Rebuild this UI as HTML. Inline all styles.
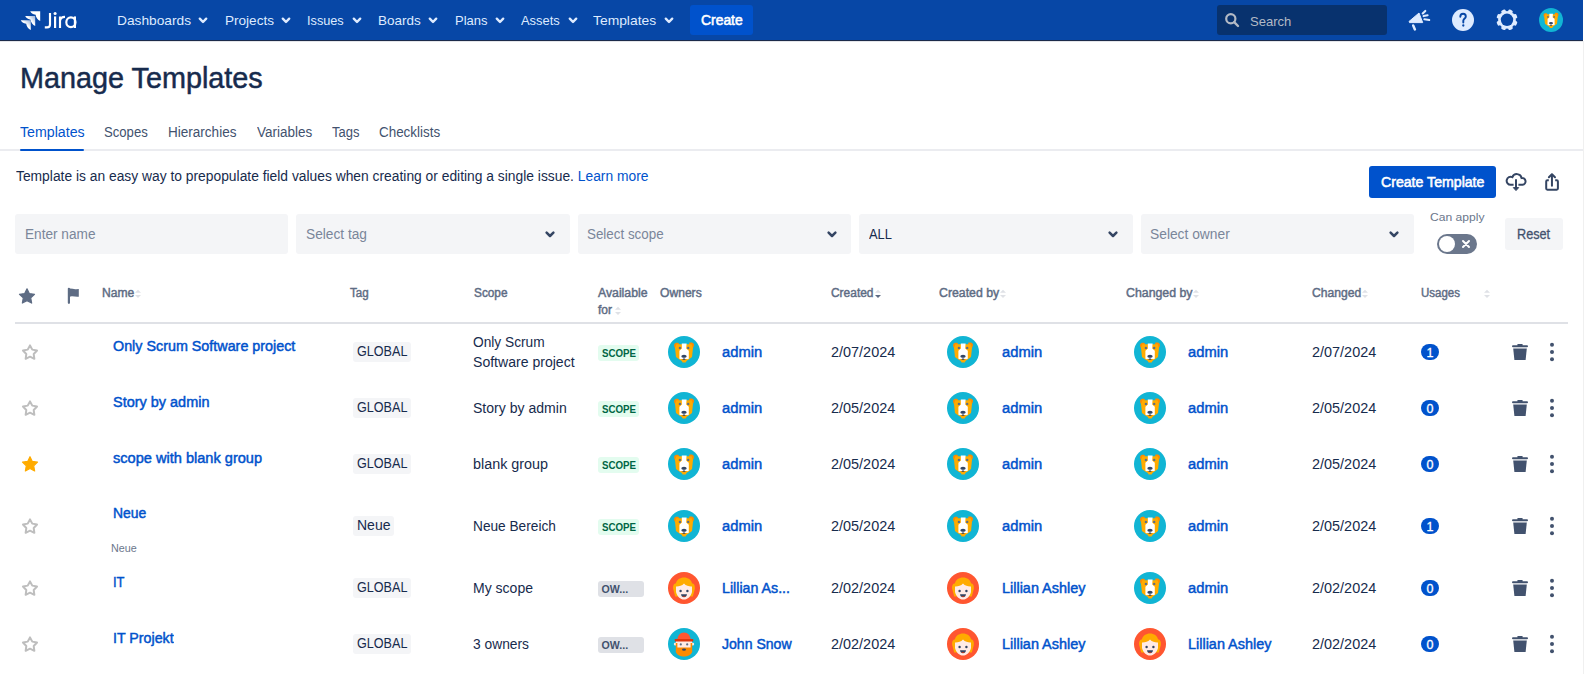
<!DOCTYPE html>
<html><head><meta charset="utf-8"><title>Manage Templates</title>
<style>
html,body{margin:0;padding:0;background:#fff;}
body{width:1584px;height:674px;overflow:hidden;position:relative;font-family:"Liberation Sans",sans-serif;}
.t{position:absolute;white-space:nowrap;}
svg{overflow:visible}
</style></head><body>
<div style="position:absolute;left:0px;top:0px;width:1583px;height:40px;background:#0747A6;border-radius:0px;"></div>
<div style="position:absolute;left:0px;top:40px;width:1583px;height:1px;background:#1c2b4a;border-radius:0px;"></div>
<div style="position:absolute;left:0px;top:41px;width:1583px;height:1px;background:#e4e6ea;border-radius:0px;"></div>
<div style="position:absolute;left:1583px;top:41px;width:1px;height:633px;background:#f0f0f0;border-radius:0px;"></div>
<svg style="position:absolute;left:0;top:0" width="100" height="40"><defs><linearGradient id="lg" x1="1" y1="0" x2="0" y2="1"><stop offset="0" stop-color="#fff" stop-opacity="0.55"/><stop offset="0.45" stop-color="#fff"/><stop offset="1" stop-color="#fff"/></linearGradient></defs><path d="M0,0 L-10,0 C-9.2,1.8 -7.6,3.2 -4.6,3.6 C-4.2,6.6 -2.6,8.6 0,9.8 Z" transform="translate(40.2,11.2)" fill="#fff"/><path d="M0,0 L-10,0 C-9.2,1.8 -7.6,3.2 -4.6,3.6 C-4.2,6.6 -2.6,8.6 0,9.8 Z" transform="translate(35.2,16.1)" fill="url(#lg)"/><path d="M0,0 L-10,0 C-9.2,1.8 -7.6,3.2 -4.6,3.6 C-4.2,6.6 -2.6,8.6 0,9.8 Z" transform="translate(30.8,20.2)" fill="url(#lg)"/></svg>
<svg style="position:absolute;left:0px;top:0px" width="90" height="40" viewBox="0 0 90 40"><g fill="none" stroke="#fff" stroke-width="2.15"><path d="M50,12.9 L50,24.4 C50,26.6 48.8,27.4 47,27.4 L44.8,27.4"/><path d="M55.1,16.4 L55.1,28"/><path d="M60,16.4 L60,28 M60,21 C60.3,18.2 62.2,16.9 65,16.9"/><ellipse cx="70.9" cy="22.2" rx="4.6" ry="4.9"/><path d="M74.9,16.4 L74.9,28"/></g><circle cx="55.1" cy="13.5" r="1.55" fill="#fff"/></svg>
<div id="t1" class="t nav" style="left:117.0px;top:11.62px;font-size:13.5px;line-height:17px;font-weight:400;color:#DEEBFF;transform:scaleX(1.0168);transform-origin:0 0;">Dashboards</div>
<svg style="position:absolute;left:198.2px;top:15px" width="10" height="10" viewBox="0 0 10 10"><path d="M1.8,3.7 L5,7 L8.2,3.7" fill="none" stroke="#DEEBFF" stroke-width="2.4" stroke-linecap="round" stroke-linejoin="round"/></svg>
<div id="t2" class="t nav" style="left:224.6px;top:11.62px;font-size:13.5px;line-height:17px;font-weight:400;color:#DEEBFF;transform:scaleX(1.0046);transform-origin:0 0;">Projects</div>
<svg style="position:absolute;left:281px;top:15px" width="10" height="10" viewBox="0 0 10 10"><path d="M1.8,3.7 L5,7 L8.2,3.7" fill="none" stroke="#DEEBFF" stroke-width="2.4" stroke-linecap="round" stroke-linejoin="round"/></svg>
<div id="t3" class="t nav" style="left:307.40000000000003px;top:11.62px;font-size:13.5px;line-height:17px;font-weight:400;color:#DEEBFF;transform:scaleX(0.9413);transform-origin:0 0;">Issues</div>
<svg style="position:absolute;left:351.8px;top:15px" width="10" height="10" viewBox="0 0 10 10"><path d="M1.8,3.7 L5,7 L8.2,3.7" fill="none" stroke="#DEEBFF" stroke-width="2.4" stroke-linecap="round" stroke-linejoin="round"/></svg>
<div id="t4" class="t nav" style="left:378.1px;top:11.62px;font-size:13.5px;line-height:17px;font-weight:400;color:#DEEBFF;transform:scaleX(0.9981);transform-origin:0 0;">Boards</div>
<svg style="position:absolute;left:428px;top:15px" width="10" height="10" viewBox="0 0 10 10"><path d="M1.8,3.7 L5,7 L8.2,3.7" fill="none" stroke="#DEEBFF" stroke-width="2.4" stroke-linecap="round" stroke-linejoin="round"/></svg>
<div id="t5" class="t nav" style="left:454.6px;top:11.62px;font-size:13.5px;line-height:17px;font-weight:400;color:#DEEBFF;transform:scaleX(0.9640);transform-origin:0 0;">Plans</div>
<svg style="position:absolute;left:494.5px;top:15px" width="10" height="10" viewBox="0 0 10 10"><path d="M1.8,3.7 L5,7 L8.2,3.7" fill="none" stroke="#DEEBFF" stroke-width="2.4" stroke-linecap="round" stroke-linejoin="round"/></svg>
<div id="t6" class="t nav" style="left:520.9px;top:11.62px;font-size:13.5px;line-height:17px;font-weight:400;color:#DEEBFF;transform:scaleX(0.9566);transform-origin:0 0;">Assets</div>
<svg style="position:absolute;left:567.5px;top:15px" width="10" height="10" viewBox="0 0 10 10"><path d="M1.8,3.7 L5,7 L8.2,3.7" fill="none" stroke="#DEEBFF" stroke-width="2.4" stroke-linecap="round" stroke-linejoin="round"/></svg>
<div id="t7" class="t nav" style="left:593.2px;top:11.62px;font-size:13.5px;line-height:17px;font-weight:400;color:#DEEBFF;transform:scaleX(1.0259);transform-origin:0 0;">Templates</div>
<svg style="position:absolute;left:663.7px;top:15px" width="10" height="10" viewBox="0 0 10 10"><path d="M1.8,3.7 L5,7 L8.2,3.7" fill="none" stroke="#DEEBFF" stroke-width="2.4" stroke-linecap="round" stroke-linejoin="round"/></svg>
<div style="position:absolute;left:690px;top:5px;width:63px;height:30px;background:#0052CC;border-radius:3px;"></div>
<div id="t8" class="t " style="left:700.8px;top:11.15px;font-size:14px;line-height:18px;font-weight:400;color:#fff;-webkit-text-stroke:0.55px #fff;transform:scaleX(0.9919);transform-origin:0 0;">Create</div>
<div style="position:absolute;left:1217px;top:5px;width:170px;height:30px;background:#08326E;border-radius:3px;"></div>
<svg style="position:absolute;left:1224px;top:12px" width="17" height="17" viewBox="0 0 17 17"><circle cx="6.8" cy="6.8" r="4.6" fill="none" stroke="#B3BAC5" stroke-width="2.2"/><path d="M10.2,10.2 L14,14" stroke="#B3BAC5" stroke-width="2.4" stroke-linecap="round"/></svg>
<div id="t9" class="t " style="left:1249.6px;top:12.62px;font-size:13.5px;line-height:17px;font-weight:400;color:#B3BAC5;transform:scaleX(0.9669);transform-origin:0 0;">Search</div>
<svg style="position:absolute;left:1404px;top:6px" width="30" height="28" viewBox="0 0 30 28"><path d="M5,15.5 L15,7 L18.7,16.6 L5.5,16.6 Z" fill="#DEEBFF" stroke="#DEEBFF" stroke-width="1" stroke-linejoin="round"/><path d="M9.2,19.5 L10.9,23.4" stroke="#DEEBFF" stroke-width="2.5" stroke-linecap="round"/><path d="M18.7,7.4 L21.3,4.9 M19.6,10.1 L23.6,9.2 M20.4,13.3 L25.2,14" stroke="#DEEBFF" stroke-width="2.1" stroke-linecap="round"/></svg>
<svg style="position:absolute;left:1451px;top:8px" width="24" height="24" viewBox="0 0 24 24"><circle cx="12" cy="12" r="11" fill="#DEEBFF"/><path d="M9.3,8.7 C9.3,6.8 10.6,5.8 12.1,5.8 C13.7,5.8 14.8,6.9 14.8,8.4 C14.8,10.3 12.5,10.7 12.3,12.7 L12.3,14.5" fill="none" stroke="#0747A6" stroke-width="1.9" stroke-linecap="round"/><circle cx="12.3" cy="17.5" r="1.15" fill="#0747A6"/></svg>
<svg style="position:absolute;left:1495px;top:8px" width="24" height="24" viewBox="0 0 24 24"><g transform="translate(12,11.8)"><rect x="-2.3" y="-10.6" width="4.6" height="5" rx="1.3" transform="rotate(22.5)" fill="#DEEBFF"/><rect x="-2.3" y="-10.6" width="4.6" height="5" rx="1.3" transform="rotate(67.5)" fill="#DEEBFF"/><rect x="-2.3" y="-10.6" width="4.6" height="5" rx="1.3" transform="rotate(112.5)" fill="#DEEBFF"/><rect x="-2.3" y="-10.6" width="4.6" height="5" rx="1.3" transform="rotate(157.5)" fill="#DEEBFF"/><rect x="-2.3" y="-10.6" width="4.6" height="5" rx="1.3" transform="rotate(202.5)" fill="#DEEBFF"/><rect x="-2.3" y="-10.6" width="4.6" height="5" rx="1.3" transform="rotate(247.5)" fill="#DEEBFF"/><rect x="-2.3" y="-10.6" width="4.6" height="5" rx="1.3" transform="rotate(292.5)" fill="#DEEBFF"/><rect x="-2.3" y="-10.6" width="4.6" height="5" rx="1.3" transform="rotate(337.5)" fill="#DEEBFF"/><circle r="8.9" fill="#DEEBFF"/><circle r="6.2" fill="#0747A6"/></g></svg>
<svg style="position:absolute;left:1539px;top:8px" width="24" height="24" viewBox="0 0 32 32"><circle cx="16" cy="16" r="16" fill="#11B5D4"/><path d="M6.2,8.6 C6.6,7 8.6,6.4 10.8,7.2 L10.8,12.4 L7.4,12.4 C6.2,11.4 5.9,10 6.2,8.6 Z" fill="#FF8B00"/><path d="M25.8,8.2 C25.4,6.6 23.4,6 21.2,6.8 L21.2,12 L24.6,12 C25.8,11 26.1,9.6 25.8,8.2 Z" fill="#FF8B00"/><path d="M8.4,8.2 L23.6,8.2 L25,12 L24,21 L20,24 L16,25.6 L12,24 L8,21 L7,12 Z" fill="#FFAB00"/><path d="M13.8,7.6 L18.6,7.6 L18.2,12.4 L20.8,14.8 L20.8,22.8 L16.2,24.4 L11.4,22.8 L11.4,14.8 L13.9,12.4 Z" fill="#fff"/><path d="M12.6,23 L19.8,23 L17.6,26.6 L14.6,26.6 Z" fill="#FFAB00"/><circle cx="11.9" cy="11.9" r="1.2" fill="#5E6C84"/><circle cx="20.2" cy="11.9" r="1.2" fill="#5E6C84"/><ellipse cx="16" cy="20.3" rx="2.7" ry="1.5" fill="#344563"/><path d="M16,21.5 L16,23.2 M14.6,23.4 L17.4,23.4" stroke="#344563" stroke-width="0.9"/></svg>
<div id="t10" class="t " style="left:19.8px;top:59.20px;font-size:30px;line-height:38px;font-weight:400;color:#172B4D;-webkit-text-stroke:0.5px #172B4D;transform:scaleX(0.9598);transform-origin:0 0;">Manage Templates</div>
<div id="t11" class="t " style="left:20.3px;top:123.15px;font-size:14px;line-height:18px;font-weight:400;color:#0052CC;transform:scaleX(1.0125);transform-origin:0 0;">Templates</div>
<div id="t12" class="t " style="left:104.2px;top:123.15px;font-size:14px;line-height:18px;font-weight:400;color:#42526E;transform:scaleX(0.9365);transform-origin:0 0;">Scopes</div>
<div id="t13" class="t " style="left:168.3px;top:123.15px;font-size:14px;line-height:18px;font-weight:400;color:#42526E;transform:scaleX(0.9669);transform-origin:0 0;">Hierarchies</div>
<div id="t14" class="t " style="left:256.7px;top:123.15px;font-size:14px;line-height:18px;font-weight:400;color:#42526E;transform:scaleX(0.9622);transform-origin:0 0;">Variables</div>
<div id="t15" class="t " style="left:331.7px;top:123.15px;font-size:14px;line-height:18px;font-weight:400;color:#42526E;transform:scaleX(0.9273);transform-origin:0 0;">Tags</div>
<div id="t16" class="t " style="left:378.6px;top:123.15px;font-size:14px;line-height:18px;font-weight:400;color:#42526E;transform:scaleX(0.9586);transform-origin:0 0;">Checklists</div>
<div style="position:absolute;left:0px;top:149px;width:1583px;height:2px;background:#EBECF0;border-radius:0px;"></div>
<div style="position:absolute;left:20px;top:149px;width:64px;height:2px;background:#0052CC;border-radius:1px;"></div>
<div id="t17" class="t " style="left:16.2px;top:167.35px;font-size:14px;line-height:18px;font-weight:400;color:#172B4D;transform:scaleX(0.9875);transform-origin:0 0;">Template is an easy way to prepopulate field values when creating or editing a single issue. <span style="color:#0052CC">Learn more</span></div>
<div style="position:absolute;left:1369px;top:166px;width:127px;height:32px;background:#0052CC;border-radius:3px;"></div>
<div id="t18" class="t " style="left:1381px;top:172.85px;font-size:14px;line-height:18px;font-weight:400;color:#fff;-webkit-text-stroke:0.55px #fff;transform:scaleX(1.0092);transform-origin:0 0;">Create Template</div>
<svg style="position:absolute;left:1502px;top:168px" width="30" height="28" viewBox="0 0 30 28"><path d="M11.6,16.8 H8.7 A4,4 0 1 1 10.4,9.2 A4.8,4.8 0 0 1 19.6,10 A3.4,3.4 0 0 1 20.6,16.8 H16.4" fill="none" stroke="#344563" stroke-width="2"/><path d="M14,11.2 L14,20" stroke="#344563" stroke-width="2"/><path d="M11.3,19.6 L16.7,19.6 L14,22.6 Z" fill="#344563" stroke="#344563" stroke-width="1" stroke-linejoin="round"/></svg>
<svg style="position:absolute;left:1540px;top:168px" width="24" height="28" viewBox="0 0 24 28"><path d="M8.8,12.2 L7.4,12.2 C6.6,12.2 6.2,12.6 6.2,13.4 L6.2,20.5 C6.2,21.3 6.6,21.65 7.4,21.65 L16.7,21.65 C17.5,21.65 17.9,21.3 17.9,20.5 L17.9,13.4 C17.9,12.6 17.5,12.2 16.7,12.2 L15.2,12.2" fill="none" stroke="#344563" stroke-width="2"/><path d="M11.95,6.8 L11.95,17.8" stroke="#344563" stroke-width="2" stroke-linecap="round"/><path d="M8.9,9.3 L11.95,6.2 L15,9.3" fill="none" stroke="#344563" stroke-width="2" stroke-linecap="round" stroke-linejoin="round"/></svg>
<div style="position:absolute;left:15px;top:214px;width:273.4px;height:40px;background:#F4F5F7;border-radius:3px;"></div>
<div id="t19" class="t " style="left:24.5px;top:225.15px;font-size:14px;line-height:18px;font-weight:400;color:#7A869A;transform:scaleX(0.9737);transform-origin:0 0;">Enter name</div>
<div style="position:absolute;left:296.4px;top:214px;width:273.4px;height:40px;background:#F4F5F7;border-radius:3px;"></div>
<div id="t20" class="t " style="left:305.9px;top:225.15px;font-size:14px;line-height:18px;font-weight:400;color:#7A869A;transform:scaleX(0.9793);transform-origin:0 0;">Select tag</div>
<svg style="position:absolute;left:544.0999999999999px;top:228px" width="12" height="12" viewBox="0 0 12 12"><path d="M2.6,4.6 L6,8 L9.4,4.6" fill="none" stroke="#344563" stroke-width="2.5" stroke-linecap="round" stroke-linejoin="round"/></svg>
<div style="position:absolute;left:577.8px;top:214px;width:273.4px;height:40px;background:#F4F5F7;border-radius:3px;"></div>
<div id="t21" class="t " style="left:587.3px;top:225.15px;font-size:14px;line-height:18px;font-weight:400;color:#7A869A;transform:scaleX(0.9561);transform-origin:0 0;">Select scope</div>
<svg style="position:absolute;left:825.4999999999999px;top:228px" width="12" height="12" viewBox="0 0 12 12"><path d="M2.6,4.6 L6,8 L9.4,4.6" fill="none" stroke="#344563" stroke-width="2.5" stroke-linecap="round" stroke-linejoin="round"/></svg>
<div style="position:absolute;left:859.2px;top:214px;width:273.4px;height:40px;background:#F4F5F7;border-radius:3px;"></div>
<div id="t22" class="t " style="left:868.7px;top:225.15px;font-size:14px;line-height:18px;font-weight:400;color:#172B4D;transform:scaleX(0.9197);transform-origin:0 0;">ALL</div>
<svg style="position:absolute;left:1106.8999999999999px;top:228px" width="12" height="12" viewBox="0 0 12 12"><path d="M2.6,4.6 L6,8 L9.4,4.6" fill="none" stroke="#344563" stroke-width="2.5" stroke-linecap="round" stroke-linejoin="round"/></svg>
<div style="position:absolute;left:1140.6px;top:214px;width:273.4px;height:40px;background:#F4F5F7;border-radius:3px;"></div>
<div id="t23" class="t " style="left:1150.1px;top:225.15px;font-size:14px;line-height:18px;font-weight:400;color:#7A869A;transform:scaleX(0.9858);transform-origin:0 0;">Select owner</div>
<svg style="position:absolute;left:1388.3px;top:228px" width="12" height="12" viewBox="0 0 12 12"><path d="M2.6,4.6 L6,8 L9.4,4.6" fill="none" stroke="#344563" stroke-width="2.5" stroke-linecap="round" stroke-linejoin="round"/></svg>
<div id="t24" class="t " style="left:1430.2px;top:210.02px;font-size:11.5px;line-height:14px;font-weight:400;color:#6B778C;transform:scaleX(1.0532);transform-origin:0 0;">Can apply</div>
<div style="position:absolute;left:1437px;top:234px;width:40px;height:20px;background:#6B778C;border-radius:10px;"></div>
<div style="position:absolute;left:1439px;top:236px;width:16px;height:16px;background:#fff;border-radius:8px;"></div>
<svg style="position:absolute;left:1460px;top:238px" width="12" height="12" viewBox="0 0 12 12"><path d="M3,3 L9,9 M9,3 L3,9" stroke="#fff" stroke-width="2" stroke-linecap="round"/></svg>
<div style="position:absolute;left:1505px;top:218px;width:58px;height:32px;background:#F4F5F7;border-radius:3px;"></div>
<div id="t25" class="t " style="left:1517.3px;top:224.65px;font-size:14px;line-height:18px;font-weight:400;color:#42526E;-webkit-text-stroke:0.3px #42526E;transform:scaleX(0.9051);transform-origin:0 0;">Reset</div>
<svg style="position:absolute;left:18px;top:287px" width="18" height="18" viewBox="0 0 18 18"><path d="M9.00,1.80 L11.29,6.54 L16.51,7.26 L12.71,10.91 L13.64,16.09 L9.00,13.60 L4.36,16.09 L5.29,10.91 L1.49,7.26 L6.71,6.54 Z" fill="#5E6C84" stroke="#5E6C84" stroke-width="1.2" stroke-linejoin="round"/></svg>
<svg style="position:absolute;left:66px;top:287px" width="16" height="18" viewBox="0 0 16 18"><path d="M2.9,1.8 L2.9,15.8" stroke="#5E6C84" stroke-width="2.2" stroke-linecap="round"/><path d="M2.4,1.8 C5,1 7.6,2.6 10.2,2.2 L12.8,1.9 L12.8,9.7 C10.2,10.3 7.6,9 5,9.4 L2.4,9.7 Z" fill="#5E6C84"/></svg>
<div id="t26" class="t " style="left:101.7px;top:286.34px;font-size:12px;line-height:15px;font-weight:400;color:#5E6C84;-webkit-text-stroke:0.45px currentColor;transform:scaleX(1.0092);transform-origin:0 0;">Name</div>
<svg style="position:absolute;left:133.8px;top:289px" width="8" height="10" viewBox="0 0 8 10"><path d="M1,3.8 L4,0.8 L7,3.8 Z" fill="#DFE1E6"/><path d="M1,5.9 L7,5.9 L4,8.9 Z" fill="#DFE1E6"/></svg>
<div id="t27" class="t " style="left:349.7px;top:286.34px;font-size:12px;line-height:15px;font-weight:400;color:#5E6C84;-webkit-text-stroke:0.45px currentColor;transform:scaleX(0.9641);transform-origin:0 0;">Tag</div>
<div id="t28" class="t " style="left:473.6px;top:286.34px;font-size:12px;line-height:15px;font-weight:400;color:#5E6C84;-webkit-text-stroke:0.45px currentColor;transform:scaleX(0.9839);transform-origin:0 0;">Scope</div>
<div id="t29" class="t " style="left:598px;top:286.34px;font-size:12px;line-height:15px;font-weight:400;color:#5E6C84;-webkit-text-stroke:0.45px currentColor;transform:scaleX(1.0214);transform-origin:0 0;">Available</div>
<div id="t30" class="t " style="left:660px;top:286.34px;font-size:12px;line-height:15px;font-weight:400;color:#5E6C84;-webkit-text-stroke:0.45px currentColor;transform:scaleX(1.0088);transform-origin:0 0;">Owners</div>
<div id="t31" class="t " style="left:830.5px;top:286.34px;font-size:12px;line-height:15px;font-weight:400;color:#5E6C84;-webkit-text-stroke:0.45px currentColor;transform:scaleX(0.9951);transform-origin:0 0;">Created</div>
<svg style="position:absolute;left:874px;top:289px" width="8" height="10" viewBox="0 0 8 10"><path d="M1,3.8 L4,0.8 L7,3.8 Z" fill="#DFE1E6"/><path d="M1,5.9 L7,5.9 L4,8.9 Z" fill="#5E6C84"/></svg>
<div id="t32" class="t " style="left:939.3px;top:286.34px;font-size:12px;line-height:15px;font-weight:400;color:#5E6C84;-webkit-text-stroke:0.45px currentColor;transform:scaleX(1.0242);transform-origin:0 0;">Created by</div>
<svg style="position:absolute;left:998.5px;top:289px" width="8" height="10" viewBox="0 0 8 10"><path d="M1,3.8 L4,0.8 L7,3.8 Z" fill="#DFE1E6"/><path d="M1,5.9 L7,5.9 L4,8.9 Z" fill="#DFE1E6"/></svg>
<div id="t33" class="t " style="left:1125.7px;top:286.34px;font-size:12px;line-height:15px;font-weight:400;color:#5E6C84;-webkit-text-stroke:0.45px currentColor;transform:scaleX(1.0280);transform-origin:0 0;">Changed by</div>
<svg style="position:absolute;left:1192px;top:289px" width="8" height="10" viewBox="0 0 8 10"><path d="M1,3.8 L4,0.8 L7,3.8 Z" fill="#DFE1E6"/><path d="M1,5.9 L7,5.9 L4,8.9 Z" fill="#DFE1E6"/></svg>
<div id="t34" class="t " style="left:1312px;top:286.34px;font-size:12px;line-height:15px;font-weight:400;color:#5E6C84;-webkit-text-stroke:0.45px currentColor;transform:scaleX(1.0101);transform-origin:0 0;">Changed</div>
<svg style="position:absolute;left:1361px;top:289px" width="8" height="10" viewBox="0 0 8 10"><path d="M1,3.8 L4,0.8 L7,3.8 Z" fill="#DFE1E6"/><path d="M1,5.9 L7,5.9 L4,8.9 Z" fill="#DFE1E6"/></svg>
<div id="t35" class="t " style="left:1421px;top:286.34px;font-size:12px;line-height:15px;font-weight:400;color:#5E6C84;-webkit-text-stroke:0.45px currentColor;transform:scaleX(0.9575);transform-origin:0 0;">Usages</div>
<svg style="position:absolute;left:1483px;top:289px" width="8" height="10" viewBox="0 0 8 10"><path d="M1,3.8 L4,0.8 L7,3.8 Z" fill="#DFE1E6"/><path d="M1,5.9 L7,5.9 L4,8.9 Z" fill="#DFE1E6"/></svg>
<div id="t36" class="t " style="left:598px;top:303.34px;font-size:12px;line-height:15px;font-weight:400;color:#5E6C84;-webkit-text-stroke:0.45px currentColor;">for</div>
<svg style="position:absolute;left:613.6px;top:306px" width="8" height="10" viewBox="0 0 8 10"><path d="M1,3.8 L4,0.8 L7,3.8 Z" fill="#DFE1E6"/><path d="M1,5.9 L7,5.9 L4,8.9 Z" fill="#DFE1E6"/></svg>
<div style="position:absolute;left:15px;top:322px;width:1553px;height:2px;background:#DFE1E6;border-radius:0px;"></div>
<svg style="position:absolute;left:21px;top:343px" width="18" height="18" viewBox="0 0 18 18"><path d="M9.00,2.40 L11.29,6.64 L16.04,7.51 L12.71,11.01 L13.35,15.79 L9.00,13.70 L4.65,15.79 L5.29,11.01 L1.96,7.51 L6.71,6.64 Z" fill="none" stroke="#BEBEBE" stroke-width="2" stroke-linejoin="round"/></svg>
<div id="t37" class="t " style="left:113.4px;top:336.95px;font-size:14px;line-height:18px;font-weight:400;color:#0052CC;-webkit-text-stroke:0.45px currentColor;transform:scaleX(1.0233);transform-origin:0 0;">Only Scrum Software project</div>
<div style="position:absolute;left:353px;top:342px;width:58px;height:20px;background:#F4F5F7;border-radius:3px;"></div>
<div id="t38" class="t " style="left:357.2px;top:341.85px;font-size:14px;line-height:18px;font-weight:400;color:#172B4D;transform:scaleX(0.8995);transform-origin:0 0;">GLOBAL</div>
<div id="t39" class="t " style="left:473.3px;top:332.95px;font-size:14px;line-height:18px;font-weight:400;color:#172B4D;transform:scaleX(0.9802);transform-origin:0 0;">Only Scrum</div>
<div id="t40" class="t " style="left:473.3px;top:352.55px;font-size:14px;line-height:18px;font-weight:400;color:#172B4D;transform:scaleX(1.0043);transform-origin:0 0;">Software project</div>
<div style="position:absolute;left:598px;top:345px;width:41px;height:16px;background:#E3FCEF;border-radius:3px;"></div>
<div id="t41" class="t " style="left:601.8px;top:346.19px;font-size:11px;line-height:14px;font-weight:700;color:#006644;transform:scaleX(0.8850);transform-origin:0 0;">SCOPE</div>
<svg style="position:absolute;left:668px;top:336px" width="32" height="32" viewBox="0 0 32 32"><circle cx="16" cy="16" r="16" fill="#11B5D4"/><path d="M6.2,8.6 C6.6,7 8.6,6.4 10.8,7.2 L10.8,12.4 L7.4,12.4 C6.2,11.4 5.9,10 6.2,8.6 Z" fill="#FF8B00"/><path d="M25.8,8.2 C25.4,6.6 23.4,6 21.2,6.8 L21.2,12 L24.6,12 C25.8,11 26.1,9.6 25.8,8.2 Z" fill="#FF8B00"/><path d="M8.4,8.2 L23.6,8.2 L25,12 L24,21 L20,24 L16,25.6 L12,24 L8,21 L7,12 Z" fill="#FFAB00"/><path d="M13.8,7.6 L18.6,7.6 L18.2,12.4 L20.8,14.8 L20.8,22.8 L16.2,24.4 L11.4,22.8 L11.4,14.8 L13.9,12.4 Z" fill="#fff"/><path d="M12.6,23 L19.8,23 L17.6,26.6 L14.6,26.6 Z" fill="#FFAB00"/><circle cx="11.9" cy="11.9" r="1.2" fill="#5E6C84"/><circle cx="20.2" cy="11.9" r="1.2" fill="#5E6C84"/><ellipse cx="16" cy="20.3" rx="2.7" ry="1.5" fill="#344563"/><path d="M16,21.5 L16,23.2 M14.6,23.4 L17.4,23.4" stroke="#344563" stroke-width="0.9"/></svg>
<div id="t42" class="t " style="left:722.1px;top:342.95px;font-size:14px;line-height:18px;font-weight:400;color:#0052CC;-webkit-text-stroke:0.45px currentColor;transform:scaleX(1.0528);transform-origin:0 0;">admin</div>
<div id="t43" class="t " style="left:830.9px;top:343.15px;font-size:14px;line-height:18px;font-weight:400;color:#172B4D;transform:scaleX(1.0310);transform-origin:0 0;">2/07/2024</div>
<svg style="position:absolute;left:947px;top:336px" width="32" height="32" viewBox="0 0 32 32"><circle cx="16" cy="16" r="16" fill="#11B5D4"/><path d="M6.2,8.6 C6.6,7 8.6,6.4 10.8,7.2 L10.8,12.4 L7.4,12.4 C6.2,11.4 5.9,10 6.2,8.6 Z" fill="#FF8B00"/><path d="M25.8,8.2 C25.4,6.6 23.4,6 21.2,6.8 L21.2,12 L24.6,12 C25.8,11 26.1,9.6 25.8,8.2 Z" fill="#FF8B00"/><path d="M8.4,8.2 L23.6,8.2 L25,12 L24,21 L20,24 L16,25.6 L12,24 L8,21 L7,12 Z" fill="#FFAB00"/><path d="M13.8,7.6 L18.6,7.6 L18.2,12.4 L20.8,14.8 L20.8,22.8 L16.2,24.4 L11.4,22.8 L11.4,14.8 L13.9,12.4 Z" fill="#fff"/><path d="M12.6,23 L19.8,23 L17.6,26.6 L14.6,26.6 Z" fill="#FFAB00"/><circle cx="11.9" cy="11.9" r="1.2" fill="#5E6C84"/><circle cx="20.2" cy="11.9" r="1.2" fill="#5E6C84"/><ellipse cx="16" cy="20.3" rx="2.7" ry="1.5" fill="#344563"/><path d="M16,21.5 L16,23.2 M14.6,23.4 L17.4,23.4" stroke="#344563" stroke-width="0.9"/></svg>
<div id="t44" class="t " style="left:1001.6px;top:342.95px;font-size:14px;line-height:18px;font-weight:400;color:#0052CC;-webkit-text-stroke:0.45px currentColor;transform:scaleX(1.0528);transform-origin:0 0;">admin</div>
<svg style="position:absolute;left:1134px;top:336px" width="32" height="32" viewBox="0 0 32 32"><circle cx="16" cy="16" r="16" fill="#11B5D4"/><path d="M6.2,8.6 C6.6,7 8.6,6.4 10.8,7.2 L10.8,12.4 L7.4,12.4 C6.2,11.4 5.9,10 6.2,8.6 Z" fill="#FF8B00"/><path d="M25.8,8.2 C25.4,6.6 23.4,6 21.2,6.8 L21.2,12 L24.6,12 C25.8,11 26.1,9.6 25.8,8.2 Z" fill="#FF8B00"/><path d="M8.4,8.2 L23.6,8.2 L25,12 L24,21 L20,24 L16,25.6 L12,24 L8,21 L7,12 Z" fill="#FFAB00"/><path d="M13.8,7.6 L18.6,7.6 L18.2,12.4 L20.8,14.8 L20.8,22.8 L16.2,24.4 L11.4,22.8 L11.4,14.8 L13.9,12.4 Z" fill="#fff"/><path d="M12.6,23 L19.8,23 L17.6,26.6 L14.6,26.6 Z" fill="#FFAB00"/><circle cx="11.9" cy="11.9" r="1.2" fill="#5E6C84"/><circle cx="20.2" cy="11.9" r="1.2" fill="#5E6C84"/><ellipse cx="16" cy="20.3" rx="2.7" ry="1.5" fill="#344563"/><path d="M16,21.5 L16,23.2 M14.6,23.4 L17.4,23.4" stroke="#344563" stroke-width="0.9"/></svg>
<div id="t45" class="t " style="left:1188px;top:342.95px;font-size:14px;line-height:18px;font-weight:400;color:#0052CC;-webkit-text-stroke:0.45px currentColor;transform:scaleX(1.0528);transform-origin:0 0;">admin</div>
<div id="t46" class="t " style="left:1312px;top:343.15px;font-size:14px;line-height:18px;font-weight:400;color:#172B4D;transform:scaleX(1.0310);transform-origin:0 0;">2/07/2024</div>
<div style="position:absolute;left:1421px;top:344px;width:18px;height:16px;background:#0052CC;border-radius:8px;"></div>
<div class="t" style="left:1421px;top:345px;width:18px;height:16px;line-height:16px;text-align:center;font-size:12.5px;font-weight:400;color:#fff;-webkit-text-stroke:0.3px #fff">1</div>
<svg style="position:absolute;left:1512px;top:344px" width="16" height="16" viewBox="0 0 16 16"><rect x="0" y="1.3" width="16" height="2" rx="1" fill="#42526E"/><rect x="5.2" y="0" width="5.6" height="2" rx="1" fill="#42526E"/><path d="M1.2,4.6 L14.8,4.6 L13.6,16 L2.4,16 Z" fill="#42526E"/></svg>
<svg style="position:absolute;left:1548px;top:342px" width="8" height="20" viewBox="0 0 8 20"><circle cx="4" cy="2.8" r="2" fill="#42526E"/><circle cx="4" cy="10" r="2" fill="#42526E"/><circle cx="4" cy="17.2" r="2" fill="#42526E"/></svg>
<svg style="position:absolute;left:21px;top:399px" width="18" height="18" viewBox="0 0 18 18"><path d="M9.00,2.40 L11.29,6.64 L16.04,7.51 L12.71,11.01 L13.35,15.79 L9.00,13.70 L4.65,15.79 L5.29,11.01 L1.96,7.51 L6.71,6.64 Z" fill="none" stroke="#BEBEBE" stroke-width="2" stroke-linejoin="round"/></svg>
<div id="t47" class="t " style="left:113.4px;top:392.95px;font-size:14px;line-height:18px;font-weight:400;color:#0052CC;-webkit-text-stroke:0.45px currentColor;transform:scaleX(1.0327);transform-origin:0 0;">Story by admin</div>
<div style="position:absolute;left:353px;top:398px;width:58px;height:20px;background:#F4F5F7;border-radius:3px;"></div>
<div id="t48" class="t " style="left:357.2px;top:397.85px;font-size:14px;line-height:18px;font-weight:400;color:#172B4D;transform:scaleX(0.8995);transform-origin:0 0;">GLOBAL</div>
<div id="t49" class="t " style="left:473.3px;top:398.95px;font-size:14px;line-height:18px;font-weight:400;color:#172B4D;transform:scaleX(1.0035);transform-origin:0 0;">Story by admin</div>
<div style="position:absolute;left:598px;top:401px;width:41px;height:16px;background:#E3FCEF;border-radius:3px;"></div>
<div id="t50" class="t " style="left:601.8px;top:402.19px;font-size:11px;line-height:14px;font-weight:700;color:#006644;transform:scaleX(0.8850);transform-origin:0 0;">SCOPE</div>
<svg style="position:absolute;left:668px;top:392px" width="32" height="32" viewBox="0 0 32 32"><circle cx="16" cy="16" r="16" fill="#11B5D4"/><path d="M6.2,8.6 C6.6,7 8.6,6.4 10.8,7.2 L10.8,12.4 L7.4,12.4 C6.2,11.4 5.9,10 6.2,8.6 Z" fill="#FF8B00"/><path d="M25.8,8.2 C25.4,6.6 23.4,6 21.2,6.8 L21.2,12 L24.6,12 C25.8,11 26.1,9.6 25.8,8.2 Z" fill="#FF8B00"/><path d="M8.4,8.2 L23.6,8.2 L25,12 L24,21 L20,24 L16,25.6 L12,24 L8,21 L7,12 Z" fill="#FFAB00"/><path d="M13.8,7.6 L18.6,7.6 L18.2,12.4 L20.8,14.8 L20.8,22.8 L16.2,24.4 L11.4,22.8 L11.4,14.8 L13.9,12.4 Z" fill="#fff"/><path d="M12.6,23 L19.8,23 L17.6,26.6 L14.6,26.6 Z" fill="#FFAB00"/><circle cx="11.9" cy="11.9" r="1.2" fill="#5E6C84"/><circle cx="20.2" cy="11.9" r="1.2" fill="#5E6C84"/><ellipse cx="16" cy="20.3" rx="2.7" ry="1.5" fill="#344563"/><path d="M16,21.5 L16,23.2 M14.6,23.4 L17.4,23.4" stroke="#344563" stroke-width="0.9"/></svg>
<div id="t51" class="t " style="left:722.1px;top:398.95px;font-size:14px;line-height:18px;font-weight:400;color:#0052CC;-webkit-text-stroke:0.45px currentColor;transform:scaleX(1.0528);transform-origin:0 0;">admin</div>
<div id="t52" class="t " style="left:830.9px;top:399.15px;font-size:14px;line-height:18px;font-weight:400;color:#172B4D;transform:scaleX(1.0310);transform-origin:0 0;">2/05/2024</div>
<svg style="position:absolute;left:947px;top:392px" width="32" height="32" viewBox="0 0 32 32"><circle cx="16" cy="16" r="16" fill="#11B5D4"/><path d="M6.2,8.6 C6.6,7 8.6,6.4 10.8,7.2 L10.8,12.4 L7.4,12.4 C6.2,11.4 5.9,10 6.2,8.6 Z" fill="#FF8B00"/><path d="M25.8,8.2 C25.4,6.6 23.4,6 21.2,6.8 L21.2,12 L24.6,12 C25.8,11 26.1,9.6 25.8,8.2 Z" fill="#FF8B00"/><path d="M8.4,8.2 L23.6,8.2 L25,12 L24,21 L20,24 L16,25.6 L12,24 L8,21 L7,12 Z" fill="#FFAB00"/><path d="M13.8,7.6 L18.6,7.6 L18.2,12.4 L20.8,14.8 L20.8,22.8 L16.2,24.4 L11.4,22.8 L11.4,14.8 L13.9,12.4 Z" fill="#fff"/><path d="M12.6,23 L19.8,23 L17.6,26.6 L14.6,26.6 Z" fill="#FFAB00"/><circle cx="11.9" cy="11.9" r="1.2" fill="#5E6C84"/><circle cx="20.2" cy="11.9" r="1.2" fill="#5E6C84"/><ellipse cx="16" cy="20.3" rx="2.7" ry="1.5" fill="#344563"/><path d="M16,21.5 L16,23.2 M14.6,23.4 L17.4,23.4" stroke="#344563" stroke-width="0.9"/></svg>
<div id="t53" class="t " style="left:1001.6px;top:398.95px;font-size:14px;line-height:18px;font-weight:400;color:#0052CC;-webkit-text-stroke:0.45px currentColor;transform:scaleX(1.0528);transform-origin:0 0;">admin</div>
<svg style="position:absolute;left:1134px;top:392px" width="32" height="32" viewBox="0 0 32 32"><circle cx="16" cy="16" r="16" fill="#11B5D4"/><path d="M6.2,8.6 C6.6,7 8.6,6.4 10.8,7.2 L10.8,12.4 L7.4,12.4 C6.2,11.4 5.9,10 6.2,8.6 Z" fill="#FF8B00"/><path d="M25.8,8.2 C25.4,6.6 23.4,6 21.2,6.8 L21.2,12 L24.6,12 C25.8,11 26.1,9.6 25.8,8.2 Z" fill="#FF8B00"/><path d="M8.4,8.2 L23.6,8.2 L25,12 L24,21 L20,24 L16,25.6 L12,24 L8,21 L7,12 Z" fill="#FFAB00"/><path d="M13.8,7.6 L18.6,7.6 L18.2,12.4 L20.8,14.8 L20.8,22.8 L16.2,24.4 L11.4,22.8 L11.4,14.8 L13.9,12.4 Z" fill="#fff"/><path d="M12.6,23 L19.8,23 L17.6,26.6 L14.6,26.6 Z" fill="#FFAB00"/><circle cx="11.9" cy="11.9" r="1.2" fill="#5E6C84"/><circle cx="20.2" cy="11.9" r="1.2" fill="#5E6C84"/><ellipse cx="16" cy="20.3" rx="2.7" ry="1.5" fill="#344563"/><path d="M16,21.5 L16,23.2 M14.6,23.4 L17.4,23.4" stroke="#344563" stroke-width="0.9"/></svg>
<div id="t54" class="t " style="left:1188px;top:398.95px;font-size:14px;line-height:18px;font-weight:400;color:#0052CC;-webkit-text-stroke:0.45px currentColor;transform:scaleX(1.0528);transform-origin:0 0;">admin</div>
<div id="t55" class="t " style="left:1312px;top:399.15px;font-size:14px;line-height:18px;font-weight:400;color:#172B4D;transform:scaleX(1.0310);transform-origin:0 0;">2/05/2024</div>
<div style="position:absolute;left:1421px;top:400px;width:18px;height:16px;background:#0052CC;border-radius:8px;"></div>
<div class="t" style="left:1421px;top:401px;width:18px;height:16px;line-height:16px;text-align:center;font-size:12.5px;font-weight:400;color:#fff;-webkit-text-stroke:0.3px #fff">0</div>
<svg style="position:absolute;left:1512px;top:400px" width="16" height="16" viewBox="0 0 16 16"><rect x="0" y="1.3" width="16" height="2" rx="1" fill="#42526E"/><rect x="5.2" y="0" width="5.6" height="2" rx="1" fill="#42526E"/><path d="M1.2,4.6 L14.8,4.6 L13.6,16 L2.4,16 Z" fill="#42526E"/></svg>
<svg style="position:absolute;left:1548px;top:398px" width="8" height="20" viewBox="0 0 8 20"><circle cx="4" cy="2.8" r="2" fill="#42526E"/><circle cx="4" cy="10" r="2" fill="#42526E"/><circle cx="4" cy="17.2" r="2" fill="#42526E"/></svg>
<svg style="position:absolute;left:21px;top:455px" width="18" height="18" viewBox="0 0 18 18"><path d="M9.00,1.70 L11.29,6.44 L16.51,7.16 L12.71,10.81 L13.64,15.99 L9.00,13.50 L4.36,15.99 L5.29,10.81 L1.49,7.16 L6.71,6.44 Z" fill="#FFAB00" stroke="#FFAB00" stroke-width="1.2" stroke-linejoin="round"/></svg>
<div id="t56" class="t " style="left:113.4px;top:448.95px;font-size:14px;line-height:18px;font-weight:400;color:#0052CC;-webkit-text-stroke:0.45px currentColor;transform:scaleX(1.0408);transform-origin:0 0;">scope with blank group</div>
<div style="position:absolute;left:353px;top:454px;width:58px;height:20px;background:#F4F5F7;border-radius:3px;"></div>
<div id="t57" class="t " style="left:357.2px;top:453.85px;font-size:14px;line-height:18px;font-weight:400;color:#172B4D;transform:scaleX(0.8995);transform-origin:0 0;">GLOBAL</div>
<div id="t58" class="t " style="left:473.3px;top:454.95px;font-size:14px;line-height:18px;font-weight:400;color:#172B4D;transform:scaleX(1.0253);transform-origin:0 0;">blank group</div>
<div style="position:absolute;left:598px;top:457px;width:41px;height:16px;background:#E3FCEF;border-radius:3px;"></div>
<div id="t59" class="t " style="left:601.8px;top:458.19px;font-size:11px;line-height:14px;font-weight:700;color:#006644;transform:scaleX(0.8850);transform-origin:0 0;">SCOPE</div>
<svg style="position:absolute;left:668px;top:448px" width="32" height="32" viewBox="0 0 32 32"><circle cx="16" cy="16" r="16" fill="#11B5D4"/><path d="M6.2,8.6 C6.6,7 8.6,6.4 10.8,7.2 L10.8,12.4 L7.4,12.4 C6.2,11.4 5.9,10 6.2,8.6 Z" fill="#FF8B00"/><path d="M25.8,8.2 C25.4,6.6 23.4,6 21.2,6.8 L21.2,12 L24.6,12 C25.8,11 26.1,9.6 25.8,8.2 Z" fill="#FF8B00"/><path d="M8.4,8.2 L23.6,8.2 L25,12 L24,21 L20,24 L16,25.6 L12,24 L8,21 L7,12 Z" fill="#FFAB00"/><path d="M13.8,7.6 L18.6,7.6 L18.2,12.4 L20.8,14.8 L20.8,22.8 L16.2,24.4 L11.4,22.8 L11.4,14.8 L13.9,12.4 Z" fill="#fff"/><path d="M12.6,23 L19.8,23 L17.6,26.6 L14.6,26.6 Z" fill="#FFAB00"/><circle cx="11.9" cy="11.9" r="1.2" fill="#5E6C84"/><circle cx="20.2" cy="11.9" r="1.2" fill="#5E6C84"/><ellipse cx="16" cy="20.3" rx="2.7" ry="1.5" fill="#344563"/><path d="M16,21.5 L16,23.2 M14.6,23.4 L17.4,23.4" stroke="#344563" stroke-width="0.9"/></svg>
<div id="t60" class="t " style="left:722.1px;top:454.95px;font-size:14px;line-height:18px;font-weight:400;color:#0052CC;-webkit-text-stroke:0.45px currentColor;transform:scaleX(1.0528);transform-origin:0 0;">admin</div>
<div id="t61" class="t " style="left:830.9px;top:455.15px;font-size:14px;line-height:18px;font-weight:400;color:#172B4D;transform:scaleX(1.0310);transform-origin:0 0;">2/05/2024</div>
<svg style="position:absolute;left:947px;top:448px" width="32" height="32" viewBox="0 0 32 32"><circle cx="16" cy="16" r="16" fill="#11B5D4"/><path d="M6.2,8.6 C6.6,7 8.6,6.4 10.8,7.2 L10.8,12.4 L7.4,12.4 C6.2,11.4 5.9,10 6.2,8.6 Z" fill="#FF8B00"/><path d="M25.8,8.2 C25.4,6.6 23.4,6 21.2,6.8 L21.2,12 L24.6,12 C25.8,11 26.1,9.6 25.8,8.2 Z" fill="#FF8B00"/><path d="M8.4,8.2 L23.6,8.2 L25,12 L24,21 L20,24 L16,25.6 L12,24 L8,21 L7,12 Z" fill="#FFAB00"/><path d="M13.8,7.6 L18.6,7.6 L18.2,12.4 L20.8,14.8 L20.8,22.8 L16.2,24.4 L11.4,22.8 L11.4,14.8 L13.9,12.4 Z" fill="#fff"/><path d="M12.6,23 L19.8,23 L17.6,26.6 L14.6,26.6 Z" fill="#FFAB00"/><circle cx="11.9" cy="11.9" r="1.2" fill="#5E6C84"/><circle cx="20.2" cy="11.9" r="1.2" fill="#5E6C84"/><ellipse cx="16" cy="20.3" rx="2.7" ry="1.5" fill="#344563"/><path d="M16,21.5 L16,23.2 M14.6,23.4 L17.4,23.4" stroke="#344563" stroke-width="0.9"/></svg>
<div id="t62" class="t " style="left:1001.6px;top:454.95px;font-size:14px;line-height:18px;font-weight:400;color:#0052CC;-webkit-text-stroke:0.45px currentColor;transform:scaleX(1.0528);transform-origin:0 0;">admin</div>
<svg style="position:absolute;left:1134px;top:448px" width="32" height="32" viewBox="0 0 32 32"><circle cx="16" cy="16" r="16" fill="#11B5D4"/><path d="M6.2,8.6 C6.6,7 8.6,6.4 10.8,7.2 L10.8,12.4 L7.4,12.4 C6.2,11.4 5.9,10 6.2,8.6 Z" fill="#FF8B00"/><path d="M25.8,8.2 C25.4,6.6 23.4,6 21.2,6.8 L21.2,12 L24.6,12 C25.8,11 26.1,9.6 25.8,8.2 Z" fill="#FF8B00"/><path d="M8.4,8.2 L23.6,8.2 L25,12 L24,21 L20,24 L16,25.6 L12,24 L8,21 L7,12 Z" fill="#FFAB00"/><path d="M13.8,7.6 L18.6,7.6 L18.2,12.4 L20.8,14.8 L20.8,22.8 L16.2,24.4 L11.4,22.8 L11.4,14.8 L13.9,12.4 Z" fill="#fff"/><path d="M12.6,23 L19.8,23 L17.6,26.6 L14.6,26.6 Z" fill="#FFAB00"/><circle cx="11.9" cy="11.9" r="1.2" fill="#5E6C84"/><circle cx="20.2" cy="11.9" r="1.2" fill="#5E6C84"/><ellipse cx="16" cy="20.3" rx="2.7" ry="1.5" fill="#344563"/><path d="M16,21.5 L16,23.2 M14.6,23.4 L17.4,23.4" stroke="#344563" stroke-width="0.9"/></svg>
<div id="t63" class="t " style="left:1188px;top:454.95px;font-size:14px;line-height:18px;font-weight:400;color:#0052CC;-webkit-text-stroke:0.45px currentColor;transform:scaleX(1.0528);transform-origin:0 0;">admin</div>
<div id="t64" class="t " style="left:1312px;top:455.15px;font-size:14px;line-height:18px;font-weight:400;color:#172B4D;transform:scaleX(1.0310);transform-origin:0 0;">2/05/2024</div>
<div style="position:absolute;left:1421px;top:456px;width:18px;height:16px;background:#0052CC;border-radius:8px;"></div>
<div class="t" style="left:1421px;top:457px;width:18px;height:16px;line-height:16px;text-align:center;font-size:12.5px;font-weight:400;color:#fff;-webkit-text-stroke:0.3px #fff">0</div>
<svg style="position:absolute;left:1512px;top:456px" width="16" height="16" viewBox="0 0 16 16"><rect x="0" y="1.3" width="16" height="2" rx="1" fill="#42526E"/><rect x="5.2" y="0" width="5.6" height="2" rx="1" fill="#42526E"/><path d="M1.2,4.6 L14.8,4.6 L13.6,16 L2.4,16 Z" fill="#42526E"/></svg>
<svg style="position:absolute;left:1548px;top:454px" width="8" height="20" viewBox="0 0 8 20"><circle cx="4" cy="2.8" r="2" fill="#42526E"/><circle cx="4" cy="10" r="2" fill="#42526E"/><circle cx="4" cy="17.2" r="2" fill="#42526E"/></svg>
<svg style="position:absolute;left:21px;top:517px" width="18" height="18" viewBox="0 0 18 18"><path d="M9.00,2.40 L11.29,6.64 L16.04,7.51 L12.71,11.01 L13.35,15.79 L9.00,13.70 L4.65,15.79 L5.29,11.01 L1.96,7.51 L6.71,6.64 Z" fill="none" stroke="#BEBEBE" stroke-width="2" stroke-linejoin="round"/></svg>
<div id="t65" class="t " style="left:113.4px;top:503.65px;font-size:14px;line-height:18px;font-weight:400;color:#0052CC;-webkit-text-stroke:0.45px currentColor;transform:scaleX(0.9917);transform-origin:0 0;">Neue</div>
<div id="t66" class="t " style="left:111.3px;top:541.12px;font-size:11.5px;line-height:14px;font-weight:400;color:#6B778C;transform:scaleX(0.9358);transform-origin:0 0;">Neue</div>
<div style="position:absolute;left:353px;top:516px;width:41px;height:20px;background:#F4F5F7;border-radius:3px;"></div>
<div id="t67" class="t " style="left:357.2px;top:515.85px;font-size:14px;line-height:18px;font-weight:400;color:#172B4D;transform:scaleX(1.0010);transform-origin:0 0;">Neue</div>
<div id="t68" class="t " style="left:473.3px;top:516.95px;font-size:14px;line-height:18px;font-weight:400;color:#172B4D;transform:scaleX(0.9770);transform-origin:0 0;">Neue Bereich</div>
<div style="position:absolute;left:598px;top:519px;width:41px;height:16px;background:#E3FCEF;border-radius:3px;"></div>
<div id="t69" class="t " style="left:601.8px;top:520.19px;font-size:11px;line-height:14px;font-weight:700;color:#006644;transform:scaleX(0.8850);transform-origin:0 0;">SCOPE</div>
<svg style="position:absolute;left:668px;top:510px" width="32" height="32" viewBox="0 0 32 32"><circle cx="16" cy="16" r="16" fill="#11B5D4"/><path d="M6.2,8.6 C6.6,7 8.6,6.4 10.8,7.2 L10.8,12.4 L7.4,12.4 C6.2,11.4 5.9,10 6.2,8.6 Z" fill="#FF8B00"/><path d="M25.8,8.2 C25.4,6.6 23.4,6 21.2,6.8 L21.2,12 L24.6,12 C25.8,11 26.1,9.6 25.8,8.2 Z" fill="#FF8B00"/><path d="M8.4,8.2 L23.6,8.2 L25,12 L24,21 L20,24 L16,25.6 L12,24 L8,21 L7,12 Z" fill="#FFAB00"/><path d="M13.8,7.6 L18.6,7.6 L18.2,12.4 L20.8,14.8 L20.8,22.8 L16.2,24.4 L11.4,22.8 L11.4,14.8 L13.9,12.4 Z" fill="#fff"/><path d="M12.6,23 L19.8,23 L17.6,26.6 L14.6,26.6 Z" fill="#FFAB00"/><circle cx="11.9" cy="11.9" r="1.2" fill="#5E6C84"/><circle cx="20.2" cy="11.9" r="1.2" fill="#5E6C84"/><ellipse cx="16" cy="20.3" rx="2.7" ry="1.5" fill="#344563"/><path d="M16,21.5 L16,23.2 M14.6,23.4 L17.4,23.4" stroke="#344563" stroke-width="0.9"/></svg>
<div id="t70" class="t " style="left:722.1px;top:516.95px;font-size:14px;line-height:18px;font-weight:400;color:#0052CC;-webkit-text-stroke:0.45px currentColor;transform:scaleX(1.0528);transform-origin:0 0;">admin</div>
<div id="t71" class="t " style="left:830.9px;top:517.15px;font-size:14px;line-height:18px;font-weight:400;color:#172B4D;transform:scaleX(1.0310);transform-origin:0 0;">2/05/2024</div>
<svg style="position:absolute;left:947px;top:510px" width="32" height="32" viewBox="0 0 32 32"><circle cx="16" cy="16" r="16" fill="#11B5D4"/><path d="M6.2,8.6 C6.6,7 8.6,6.4 10.8,7.2 L10.8,12.4 L7.4,12.4 C6.2,11.4 5.9,10 6.2,8.6 Z" fill="#FF8B00"/><path d="M25.8,8.2 C25.4,6.6 23.4,6 21.2,6.8 L21.2,12 L24.6,12 C25.8,11 26.1,9.6 25.8,8.2 Z" fill="#FF8B00"/><path d="M8.4,8.2 L23.6,8.2 L25,12 L24,21 L20,24 L16,25.6 L12,24 L8,21 L7,12 Z" fill="#FFAB00"/><path d="M13.8,7.6 L18.6,7.6 L18.2,12.4 L20.8,14.8 L20.8,22.8 L16.2,24.4 L11.4,22.8 L11.4,14.8 L13.9,12.4 Z" fill="#fff"/><path d="M12.6,23 L19.8,23 L17.6,26.6 L14.6,26.6 Z" fill="#FFAB00"/><circle cx="11.9" cy="11.9" r="1.2" fill="#5E6C84"/><circle cx="20.2" cy="11.9" r="1.2" fill="#5E6C84"/><ellipse cx="16" cy="20.3" rx="2.7" ry="1.5" fill="#344563"/><path d="M16,21.5 L16,23.2 M14.6,23.4 L17.4,23.4" stroke="#344563" stroke-width="0.9"/></svg>
<div id="t72" class="t " style="left:1001.6px;top:516.95px;font-size:14px;line-height:18px;font-weight:400;color:#0052CC;-webkit-text-stroke:0.45px currentColor;transform:scaleX(1.0528);transform-origin:0 0;">admin</div>
<svg style="position:absolute;left:1134px;top:510px" width="32" height="32" viewBox="0 0 32 32"><circle cx="16" cy="16" r="16" fill="#11B5D4"/><path d="M6.2,8.6 C6.6,7 8.6,6.4 10.8,7.2 L10.8,12.4 L7.4,12.4 C6.2,11.4 5.9,10 6.2,8.6 Z" fill="#FF8B00"/><path d="M25.8,8.2 C25.4,6.6 23.4,6 21.2,6.8 L21.2,12 L24.6,12 C25.8,11 26.1,9.6 25.8,8.2 Z" fill="#FF8B00"/><path d="M8.4,8.2 L23.6,8.2 L25,12 L24,21 L20,24 L16,25.6 L12,24 L8,21 L7,12 Z" fill="#FFAB00"/><path d="M13.8,7.6 L18.6,7.6 L18.2,12.4 L20.8,14.8 L20.8,22.8 L16.2,24.4 L11.4,22.8 L11.4,14.8 L13.9,12.4 Z" fill="#fff"/><path d="M12.6,23 L19.8,23 L17.6,26.6 L14.6,26.6 Z" fill="#FFAB00"/><circle cx="11.9" cy="11.9" r="1.2" fill="#5E6C84"/><circle cx="20.2" cy="11.9" r="1.2" fill="#5E6C84"/><ellipse cx="16" cy="20.3" rx="2.7" ry="1.5" fill="#344563"/><path d="M16,21.5 L16,23.2 M14.6,23.4 L17.4,23.4" stroke="#344563" stroke-width="0.9"/></svg>
<div id="t73" class="t " style="left:1188px;top:516.95px;font-size:14px;line-height:18px;font-weight:400;color:#0052CC;-webkit-text-stroke:0.45px currentColor;transform:scaleX(1.0528);transform-origin:0 0;">admin</div>
<div id="t74" class="t " style="left:1312px;top:517.15px;font-size:14px;line-height:18px;font-weight:400;color:#172B4D;transform:scaleX(1.0310);transform-origin:0 0;">2/05/2024</div>
<div style="position:absolute;left:1421px;top:518px;width:18px;height:16px;background:#0052CC;border-radius:8px;"></div>
<div class="t" style="left:1421px;top:519px;width:18px;height:16px;line-height:16px;text-align:center;font-size:12.5px;font-weight:400;color:#fff;-webkit-text-stroke:0.3px #fff">1</div>
<svg style="position:absolute;left:1512px;top:518px" width="16" height="16" viewBox="0 0 16 16"><rect x="0" y="1.3" width="16" height="2" rx="1" fill="#42526E"/><rect x="5.2" y="0" width="5.6" height="2" rx="1" fill="#42526E"/><path d="M1.2,4.6 L14.8,4.6 L13.6,16 L2.4,16 Z" fill="#42526E"/></svg>
<svg style="position:absolute;left:1548px;top:516px" width="8" height="20" viewBox="0 0 8 20"><circle cx="4" cy="2.8" r="2" fill="#42526E"/><circle cx="4" cy="10" r="2" fill="#42526E"/><circle cx="4" cy="17.2" r="2" fill="#42526E"/></svg>
<svg style="position:absolute;left:21px;top:579px" width="18" height="18" viewBox="0 0 18 18"><path d="M9.00,2.40 L11.29,6.64 L16.04,7.51 L12.71,11.01 L13.35,15.79 L9.00,13.70 L4.65,15.79 L5.29,11.01 L1.96,7.51 L6.71,6.64 Z" fill="none" stroke="#BEBEBE" stroke-width="2" stroke-linejoin="round"/></svg>
<div id="t75" class="t " style="left:113.4px;top:572.95px;font-size:14px;line-height:18px;font-weight:400;color:#0052CC;-webkit-text-stroke:0.45px currentColor;transform:scaleX(0.9255);transform-origin:0 0;">IT</div>
<div style="position:absolute;left:353px;top:578px;width:58px;height:20px;background:#F4F5F7;border-radius:3px;"></div>
<div id="t76" class="t " style="left:357.2px;top:577.85px;font-size:14px;line-height:18px;font-weight:400;color:#172B4D;transform:scaleX(0.8995);transform-origin:0 0;">GLOBAL</div>
<div id="t77" class="t " style="left:473.3px;top:578.95px;font-size:14px;line-height:18px;font-weight:400;color:#172B4D;transform:scaleX(1.0013);transform-origin:0 0;">My scope</div>
<div style="position:absolute;left:598px;top:581px;width:46px;height:16px;background:#DFE1E6;border-radius:3px;"></div>
<div id="t78" class="t " style="left:601.6px;top:582.83px;font-size:10.6px;line-height:13px;font-weight:700;color:#42526E;">OW...</div>
<svg style="position:absolute;left:668px;top:572px" width="32" height="32" viewBox="0 0 32 32"><circle cx="16" cy="16" r="16" fill="#FF5630"/><path d="M5.2,17 C4.6,13 6.4,11.4 8,11.2 C8.6,7.6 12,5.4 16,5.4 C20,5.4 23.4,7.6 24,11.2 C25.6,11.4 27.4,13 26.8,17 L24.8,24.4 L7.2,24.4 Z" fill="#FFAB00"/><path d="M8,14.4 C10.4,14.6 14,13.8 16,11.4 C18,13.8 21.6,14.6 24,14.4 L24,20 C23,24.4 19.6,27.6 16,27.6 C12.4,27.6 9,24.4 8,20 Z" fill="#FFEBE6"/><circle cx="12.6" cy="19" r="1.2" fill="#344563"/><circle cx="19.4" cy="19" r="1.2" fill="#344563"/><path d="M13,22.2 L19,22.2 C18.8,24 17.6,25.2 16,25.2 C14.4,25.2 13.2,24 13,22.2 Z" fill="#344563"/><path d="M14.4,24.6 C15,23.8 17,23.8 17.6,24.6 C17,25.2 15,25.2 14.4,24.6 Z" fill="#DE350B"/></svg>
<div id="t79" class="t " style="left:722.1px;top:578.95px;font-size:14px;line-height:18px;font-weight:400;color:#0052CC;-webkit-text-stroke:0.45px currentColor;transform:scaleX(1.0161);transform-origin:0 0;">Lillian As...</div>
<div id="t80" class="t " style="left:830.9px;top:579.15px;font-size:14px;line-height:18px;font-weight:400;color:#172B4D;transform:scaleX(1.0310);transform-origin:0 0;">2/02/2024</div>
<svg style="position:absolute;left:947px;top:572px" width="32" height="32" viewBox="0 0 32 32"><circle cx="16" cy="16" r="16" fill="#FF5630"/><path d="M5.2,17 C4.6,13 6.4,11.4 8,11.2 C8.6,7.6 12,5.4 16,5.4 C20,5.4 23.4,7.6 24,11.2 C25.6,11.4 27.4,13 26.8,17 L24.8,24.4 L7.2,24.4 Z" fill="#FFAB00"/><path d="M8,14.4 C10.4,14.6 14,13.8 16,11.4 C18,13.8 21.6,14.6 24,14.4 L24,20 C23,24.4 19.6,27.6 16,27.6 C12.4,27.6 9,24.4 8,20 Z" fill="#FFEBE6"/><circle cx="12.6" cy="19" r="1.2" fill="#344563"/><circle cx="19.4" cy="19" r="1.2" fill="#344563"/><path d="M13,22.2 L19,22.2 C18.8,24 17.6,25.2 16,25.2 C14.4,25.2 13.2,24 13,22.2 Z" fill="#344563"/><path d="M14.4,24.6 C15,23.8 17,23.8 17.6,24.6 C17,25.2 15,25.2 14.4,24.6 Z" fill="#DE350B"/></svg>
<div id="t81" class="t " style="left:1001.6px;top:578.95px;font-size:14px;line-height:18px;font-weight:400;color:#0052CC;-webkit-text-stroke:0.45px currentColor;transform:scaleX(1.0308);transform-origin:0 0;">Lillian Ashley</div>
<svg style="position:absolute;left:1134px;top:572px" width="32" height="32" viewBox="0 0 32 32"><circle cx="16" cy="16" r="16" fill="#11B5D4"/><path d="M6.2,8.6 C6.6,7 8.6,6.4 10.8,7.2 L10.8,12.4 L7.4,12.4 C6.2,11.4 5.9,10 6.2,8.6 Z" fill="#FF8B00"/><path d="M25.8,8.2 C25.4,6.6 23.4,6 21.2,6.8 L21.2,12 L24.6,12 C25.8,11 26.1,9.6 25.8,8.2 Z" fill="#FF8B00"/><path d="M8.4,8.2 L23.6,8.2 L25,12 L24,21 L20,24 L16,25.6 L12,24 L8,21 L7,12 Z" fill="#FFAB00"/><path d="M13.8,7.6 L18.6,7.6 L18.2,12.4 L20.8,14.8 L20.8,22.8 L16.2,24.4 L11.4,22.8 L11.4,14.8 L13.9,12.4 Z" fill="#fff"/><path d="M12.6,23 L19.8,23 L17.6,26.6 L14.6,26.6 Z" fill="#FFAB00"/><circle cx="11.9" cy="11.9" r="1.2" fill="#5E6C84"/><circle cx="20.2" cy="11.9" r="1.2" fill="#5E6C84"/><ellipse cx="16" cy="20.3" rx="2.7" ry="1.5" fill="#344563"/><path d="M16,21.5 L16,23.2 M14.6,23.4 L17.4,23.4" stroke="#344563" stroke-width="0.9"/></svg>
<div id="t82" class="t " style="left:1188px;top:578.95px;font-size:14px;line-height:18px;font-weight:400;color:#0052CC;-webkit-text-stroke:0.45px currentColor;transform:scaleX(1.0528);transform-origin:0 0;">admin</div>
<div id="t83" class="t " style="left:1312px;top:579.15px;font-size:14px;line-height:18px;font-weight:400;color:#172B4D;transform:scaleX(1.0310);transform-origin:0 0;">2/02/2024</div>
<div style="position:absolute;left:1421px;top:580px;width:18px;height:16px;background:#0052CC;border-radius:8px;"></div>
<div class="t" style="left:1421px;top:581px;width:18px;height:16px;line-height:16px;text-align:center;font-size:12.5px;font-weight:400;color:#fff;-webkit-text-stroke:0.3px #fff">0</div>
<svg style="position:absolute;left:1512px;top:580px" width="16" height="16" viewBox="0 0 16 16"><rect x="0" y="1.3" width="16" height="2" rx="1" fill="#42526E"/><rect x="5.2" y="0" width="5.6" height="2" rx="1" fill="#42526E"/><path d="M1.2,4.6 L14.8,4.6 L13.6,16 L2.4,16 Z" fill="#42526E"/></svg>
<svg style="position:absolute;left:1548px;top:578px" width="8" height="20" viewBox="0 0 8 20"><circle cx="4" cy="2.8" r="2" fill="#42526E"/><circle cx="4" cy="10" r="2" fill="#42526E"/><circle cx="4" cy="17.2" r="2" fill="#42526E"/></svg>
<svg style="position:absolute;left:21px;top:635px" width="18" height="18" viewBox="0 0 18 18"><path d="M9.00,2.40 L11.29,6.64 L16.04,7.51 L12.71,11.01 L13.35,15.79 L9.00,13.70 L4.65,15.79 L5.29,11.01 L1.96,7.51 L6.71,6.64 Z" fill="none" stroke="#BEBEBE" stroke-width="2" stroke-linejoin="round"/></svg>
<div id="t84" class="t " style="left:113.4px;top:628.95px;font-size:14px;line-height:18px;font-weight:400;color:#0052CC;-webkit-text-stroke:0.45px currentColor;transform:scaleX(1.0161);transform-origin:0 0;">IT Projekt</div>
<div style="position:absolute;left:353px;top:634px;width:58px;height:20px;background:#F4F5F7;border-radius:3px;"></div>
<div id="t85" class="t " style="left:357.2px;top:633.85px;font-size:14px;line-height:18px;font-weight:400;color:#172B4D;transform:scaleX(0.8995);transform-origin:0 0;">GLOBAL</div>
<div id="t86" class="t " style="left:473.3px;top:634.95px;font-size:14px;line-height:18px;font-weight:400;color:#172B4D;transform:scaleX(0.9854);transform-origin:0 0;">3 owners</div>
<div style="position:absolute;left:598px;top:637px;width:46px;height:16px;background:#DFE1E6;border-radius:3px;"></div>
<div id="t87" class="t " style="left:601.6px;top:638.83px;font-size:10.6px;line-height:13px;font-weight:700;color:#42526E;">OW...</div>
<svg style="position:absolute;left:668px;top:628px" width="32" height="32" viewBox="0 0 32 32"><circle cx="16" cy="16" r="16" fill="#11B5D4"/><circle cx="7.4" cy="16" r="1.6" fill="#FFEBE6"/><circle cx="24.6" cy="16" r="1.6" fill="#FFEBE6"/><rect x="8" y="12" width="16" height="9" fill="#FFEBE6"/><path d="M7.8,15 L9.4,15 L9.4,19.4 L22.6,19.4 L22.6,15 L24.2,15 L24.2,24 C22.6,27.4 19.4,28.6 16,28.6 C12.6,28.6 9.4,27.4 7.8,24 Z" fill="#FF8B00"/><path d="M9.4,12 C9.4,7.6 12.2,4.6 16,4.6 C19.8,4.6 22.6,7.6 22.6,12 Z" fill="#FF5630"/><rect x="6.8" y="11" width="18.4" height="2.4" rx="0.4" fill="#DE350B"/><circle cx="12.8" cy="16.4" r="1.1" fill="#5E6C84"/><circle cx="19.2" cy="16.4" r="1.1" fill="#5E6C84"/><ellipse cx="16" cy="21.6" rx="2" ry="1.2" fill="#344563"/></svg>
<div id="t88" class="t " style="left:722.1px;top:634.95px;font-size:14px;line-height:18px;font-weight:400;color:#0052CC;-webkit-text-stroke:0.45px currentColor;transform:scaleX(1.0047);transform-origin:0 0;">John Snow</div>
<div id="t89" class="t " style="left:830.9px;top:635.15px;font-size:14px;line-height:18px;font-weight:400;color:#172B4D;transform:scaleX(1.0310);transform-origin:0 0;">2/02/2024</div>
<svg style="position:absolute;left:947px;top:628px" width="32" height="32" viewBox="0 0 32 32"><circle cx="16" cy="16" r="16" fill="#FF5630"/><path d="M5.2,17 C4.6,13 6.4,11.4 8,11.2 C8.6,7.6 12,5.4 16,5.4 C20,5.4 23.4,7.6 24,11.2 C25.6,11.4 27.4,13 26.8,17 L24.8,24.4 L7.2,24.4 Z" fill="#FFAB00"/><path d="M8,14.4 C10.4,14.6 14,13.8 16,11.4 C18,13.8 21.6,14.6 24,14.4 L24,20 C23,24.4 19.6,27.6 16,27.6 C12.4,27.6 9,24.4 8,20 Z" fill="#FFEBE6"/><circle cx="12.6" cy="19" r="1.2" fill="#344563"/><circle cx="19.4" cy="19" r="1.2" fill="#344563"/><path d="M13,22.2 L19,22.2 C18.8,24 17.6,25.2 16,25.2 C14.4,25.2 13.2,24 13,22.2 Z" fill="#344563"/><path d="M14.4,24.6 C15,23.8 17,23.8 17.6,24.6 C17,25.2 15,25.2 14.4,24.6 Z" fill="#DE350B"/></svg>
<div id="t90" class="t " style="left:1001.6px;top:634.95px;font-size:14px;line-height:18px;font-weight:400;color:#0052CC;-webkit-text-stroke:0.45px currentColor;transform:scaleX(1.0308);transform-origin:0 0;">Lillian Ashley</div>
<svg style="position:absolute;left:1134px;top:628px" width="32" height="32" viewBox="0 0 32 32"><circle cx="16" cy="16" r="16" fill="#FF5630"/><path d="M5.2,17 C4.6,13 6.4,11.4 8,11.2 C8.6,7.6 12,5.4 16,5.4 C20,5.4 23.4,7.6 24,11.2 C25.6,11.4 27.4,13 26.8,17 L24.8,24.4 L7.2,24.4 Z" fill="#FFAB00"/><path d="M8,14.4 C10.4,14.6 14,13.8 16,11.4 C18,13.8 21.6,14.6 24,14.4 L24,20 C23,24.4 19.6,27.6 16,27.6 C12.4,27.6 9,24.4 8,20 Z" fill="#FFEBE6"/><circle cx="12.6" cy="19" r="1.2" fill="#344563"/><circle cx="19.4" cy="19" r="1.2" fill="#344563"/><path d="M13,22.2 L19,22.2 C18.8,24 17.6,25.2 16,25.2 C14.4,25.2 13.2,24 13,22.2 Z" fill="#344563"/><path d="M14.4,24.6 C15,23.8 17,23.8 17.6,24.6 C17,25.2 15,25.2 14.4,24.6 Z" fill="#DE350B"/></svg>
<div id="t91" class="t " style="left:1188px;top:634.95px;font-size:14px;line-height:18px;font-weight:400;color:#0052CC;-webkit-text-stroke:0.45px currentColor;transform:scaleX(1.0308);transform-origin:0 0;">Lillian Ashley</div>
<div id="t92" class="t " style="left:1312px;top:635.15px;font-size:14px;line-height:18px;font-weight:400;color:#172B4D;transform:scaleX(1.0310);transform-origin:0 0;">2/02/2024</div>
<div style="position:absolute;left:1421px;top:636px;width:18px;height:16px;background:#0052CC;border-radius:8px;"></div>
<div class="t" style="left:1421px;top:637px;width:18px;height:16px;line-height:16px;text-align:center;font-size:12.5px;font-weight:400;color:#fff;-webkit-text-stroke:0.3px #fff">0</div>
<svg style="position:absolute;left:1512px;top:636px" width="16" height="16" viewBox="0 0 16 16"><rect x="0" y="1.3" width="16" height="2" rx="1" fill="#42526E"/><rect x="5.2" y="0" width="5.6" height="2" rx="1" fill="#42526E"/><path d="M1.2,4.6 L14.8,4.6 L13.6,16 L2.4,16 Z" fill="#42526E"/></svg>
<svg style="position:absolute;left:1548px;top:634px" width="8" height="20" viewBox="0 0 8 20"><circle cx="4" cy="2.8" r="2" fill="#42526E"/><circle cx="4" cy="10" r="2" fill="#42526E"/><circle cx="4" cy="17.2" r="2" fill="#42526E"/></svg>
</body></html>
